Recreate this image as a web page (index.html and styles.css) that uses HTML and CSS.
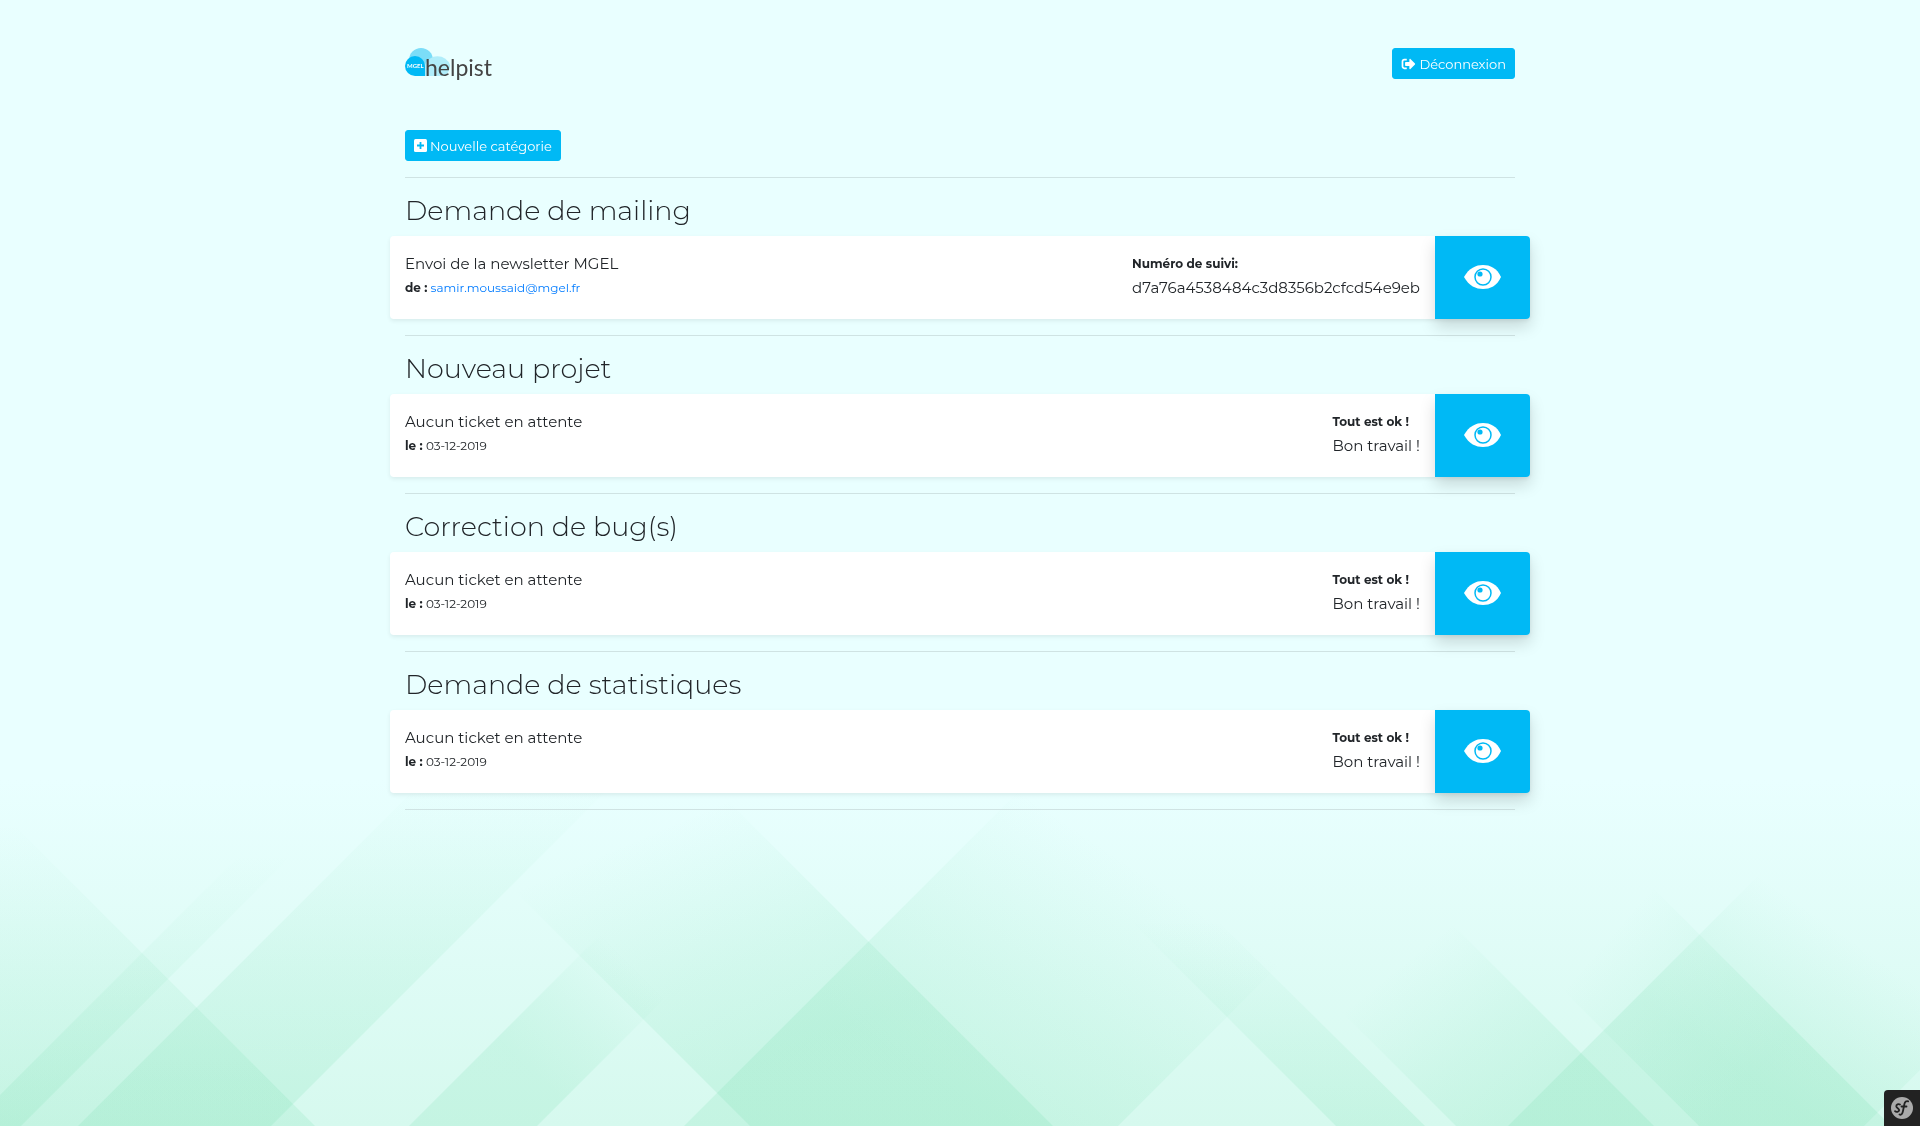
FILE: index.html
```html
<!DOCTYPE html>
<html lang="fr">
<head>
<meta charset="utf-8">
<meta name="viewport" content="width=device-width, initial-scale=1">
<title>Helpist</title>
<link rel="stylesheet" href="styles.css">
</head>
<body>
<svg class="backdrop" viewBox="0 0 1920 346" preserveAspectRatio="xMidYMax slice" aria-hidden="true">
  <defs>
    <linearGradient id="base" x1="0" y1="0" x2="0" y2="1"><stop offset="0" stop-color="#e9ffff"/><stop offset="1" stop-color="#d6f9ee"/></linearGradient>
    <linearGradient id="g1" gradientUnits="userSpaceOnUse" x1="0" y1="43" x2="0" y2="346"><stop offset="0" stop-color="#60d89f" stop-opacity="0"/><stop offset=".6" stop-color="#60d89f" stop-opacity=".1"/><stop offset="1" stop-color="#60d89f" stop-opacity=".15"/></linearGradient>
    <linearGradient id="g2" href="#g1" y1="75"/>
    <linearGradient id="g3" href="#g1" y1="0" y2="300"/>
    <linearGradient id="g4" href="#g1" x1="620" y1="65" x2="720" y2="300"/>
    <linearGradient id="g5" href="#g1" x1="1140" y1="90" x2="980" y2="330"/>
    <linearGradient id="g6" href="#g1" y1="140"/>
    <linearGradient id="g7" href="#g1" x1="1413" y1="175" x2="1530" y2="320"/>
    <linearGradient id="g8" href="#g1" x1="1838" y1="150" x2="1740" y2="290"/>
    <linearGradient id="g9" href="#g1" x1="1610" y1="155" x2="1760" y2="285"/>
    <linearGradient id="g10" href="#g1" x1="633" y1="185" x2="530" y2="290"/>
  </defs>
  <rect width="1920" height="346" fill="url(#base)"/>
  <path fill="url(#g1)" d="M0 31 315 346H0z"/>
  <path fill="url(#g2)" d="M0 315 315 0h52L21 346H0z"/>
  <path fill="url(#g3)" d="M78 346 424 0h193L271 346z"/>
  <path fill="url(#g4)" d="M404 0h303l346 346H750z"/>
  <path fill="url(#g10)" d="M409 346 755 0h128L537 346z"/>
  <path fill="url(#g5)" d="M684 346 1030 0h434L1118 346z"/>
  <path fill="url(#g6)" d="M990 0h85l350 346h-89z"/>
  <path fill="url(#g7)" d="M1110 0h198l346 346h-198z"/>
  <path fill="url(#g9)" d="M1353 0h192l346 346h-192z"/>
  <path fill="url(#g8)" d="M1508 346 1854 0h66v290l-56 56z"/>
</svg>

<svg class="sprite" aria-hidden="true">
  <symbol id="eye" viewBox="0 0 38 26">
    <path fill="#fff" d="M0 13C5 4 12 1 19 1s14 3 18 12c-4 9-11 12-18 12S5 22 0 13z"/>
    <circle cx="19" cy="13" r="8" fill="none" stroke="#00b9f5" stroke-width="1.5"/>
    <circle cx="16" cy="10" r="2.6" fill="#00b9f5"/>
  </symbol>
</svg>

<div class="container">
  <header class="header">
    <a class="logo" href="#" aria-label="Helpist">
      <svg width="90" height="36" viewBox="0 0 90 36">
        <circle cx="16" cy="12" r="12" fill="#7bddf8"/>
        <path d="M20 28V17a13 12 0 0 1 25 0c0 6-3 11-9 11z" fill="#b0edfa"/>
        <path d="M10 8a10 10 0 0 1 10 10v10H10a10 10 0 0 1 0-20z" fill="#00b9f5"/>
        <text class="logo-tag" x="2" y="20">MGEL</text>
        <text class="logo-name" x="20" y="28">helpist</text>
      </svg>
    </a>
    <button class="btn" type="button">
      <svg width="15" height="12" viewBox="0 0 512 448" fill="#fff"><path d="M497 241 329 409c-15 15-41 4-41-17v-96H152c-13 0-24-11-24-24v-96c0-13 11-24 24-24h136V56c0-21 26-32 41-17l168 168c9 9 9 25 0 34zM192 404v-40c0-7-5-12-12-12H96c-18 0-32-14-32-32V128c0-18 14-32 32-32h84c7 0 12-5 12-12V44c0-7-5-12-12-12H96C43 32 0 75 0 128v192c0 53 43 96 96 96h84c7 0 12-5 12-12z"/></svg>
      Déconnexion
    </button>
  </header>

  <main>
    <button class="btn" type="button">
      <svg width="13" height="13" viewBox="0 0 13 13"><rect width="13" height="13" rx="1.5" fill="#fff"/><path d="M6.500 3v7M3 6.500h7" stroke="#00b9f5" stroke-width="1.800"/></svg>
      Nouvelle catégorie
    </button>

    <section class="category">
      <h2>Demande de mailing</h2>
      <article class="ticket">
        <div class="info"><p>Envoi de la newsletter MGEL</p><p class="meta"><b>de :</b> <a href="mailto:samir.moussaid@mgel.fr">samir.moussaid@mgel.fr</a></p></div>
        <div class="status"><b>Numéro de suivi:</b><p>d7a76a4538484c3d8356b2cfcd54e9eb</p></div>
        <a class="view" href="#" aria-label="Voir les demandes de mailing"><svg width="38" height="26"><use href="#eye"/></svg></a>
      </article>
    </section>
    <section class="category">
      <h2>Nouveau projet</h2>
      <article class="ticket">
        <div class="info"><p>Aucun ticket en attente</p><p class="meta"><b>le :</b> 03-12-2019</p></div>
        <div class="status"><b>Tout est ok !</b><p>Bon travail !</p></div>
        <a class="view" href="#" aria-label="Voir les nouveaux projets"><svg width="38" height="26"><use href="#eye"/></svg></a>
      </article>
    </section>
    <section class="category">
      <h2>Correction de bug(s)</h2>
      <article class="ticket">
        <div class="info"><p>Aucun ticket en attente</p><p class="meta"><b>le :</b> 03-12-2019</p></div>
        <div class="status"><b>Tout est ok !</b><p>Bon travail !</p></div>
        <a class="view" href="#" aria-label="Voir les corrections de bugs"><svg width="38" height="26"><use href="#eye"/></svg></a>
      </article>
    </section>
    <section class="category last">
      <h2>Demande de statistiques</h2>
      <article class="ticket">
        <div class="info"><p>Aucun ticket en attente</p><p class="meta"><b>le :</b> 03-12-2019</p></div>
        <div class="status"><b>Tout est ok !</b><p>Bon travail !</p></div>
        <a class="view" href="#" aria-label="Voir les demandes de statistiques"><svg width="38" height="26"><use href="#eye"/></svg></a>
      </article>
    </section>
  </main>
</div>

<button class="toolbar" type="button" aria-label="Symfony">
  <svg width="22" height="22" viewBox="0 0 22 22"><circle cx="11" cy="11" r="11" fill="#aaa"/><path d="M9 7.500C7.500 6.500 5 7.500 5.300 9.500c.3 1.600 3 1.900 2.900 3.700C8 15 5.200 15.500 4 14.200M8.500 17.500c2 1 3-1 3.600-4l1.300-6.500c.5-2.200 2-3.500 3.800-2.600M10.500 9.500h5" fill="none" stroke="#222" stroke-width="1.800" stroke-linecap="round"/></svg>
</button>
</body>
</html>
```
FILE: styles.css
```css
* { box-sizing: border-box; }

body {
  margin: 0;
  min-height: 100vh;
  background: #e9ffff;
  color: #212529;
  font-family: Montserrat, "Open Sans", sans-serif;
  font-size: 15px;
  line-height: 24px;
}

p, h2 { margin: 0; }
a { color: #007bff; text-decoration: none; }

.backdrop {
  position: fixed;
  bottom: 0;
  left: 0;
  z-index: -1;
  width: 100%;
  height: 346px;
}

.sprite { display: none; }

.container {
  max-width: 1140px;
  margin: 0 auto;
  padding: 48px 15px;
}

.header {
  display: flex;
  justify-content: space-between;
  align-items: flex-start;
  margin-bottom: 46px;
}

.logo { display: flex; }
.logo-tag { fill: #fff; font-family: Lato, sans-serif; font-size: 6px; font-weight: 700; }
.logo-name { fill: #444; font-family: Lato, sans-serif; font-size: 23px; font-weight: 400; }

.btn {
  display: inline-flex;
  align-items: center;
  gap: 3px;
  height: 31px;
  padding: 0 8px;
  border: 1px solid #00b9f5;
  border-radius: 3px;
  background: #00b9f5;
  color: #fff;
  font: inherit;
  font-size: 13px;
  font-weight: 400;
}

main > .btn { margin-bottom: 16px; vertical-align: top; }

.category {
  padding: 16px 0;
  border-top: 1px solid #cfe3e3;
}
.category.last { border-bottom: 1px solid #cfe3e3; }

h2 {
  margin-bottom: 8px;
  font-size: 27px;
  font-weight: 300;
  line-height: 34px;
}

.ticket {
  display: flex;
  height: 83px;
  margin: 0 -15px;
  border-radius: 4px;
  background: #fff;
  box-shadow: 0 2px 4px rgba(0, 0, 0, .075);
}

.info { flex: 1; padding: 16px 15px; }
.meta { font-size: 12px; }
.status { padding: 16px 15px; }
.status b { display: block; font-size: 12px; }

.view {
  display: flex;
  align-items: center;
  justify-content: center;
  width: 95px;
  padding-bottom: 2px;
  border-radius: 0 4px 4px 0;
  background: #00b9f5;
  box-shadow: 0 8px 16px rgba(0, 0, 0, .15);
}

.toolbar {
  display: flex;
  position: fixed;
  right: 0;
  bottom: 0;
  width: 36px;
  height: 36px;
  padding: 7px;
  border: 0;
  border-radius: 4px 0 0 0;
  background: #222;
}
```
